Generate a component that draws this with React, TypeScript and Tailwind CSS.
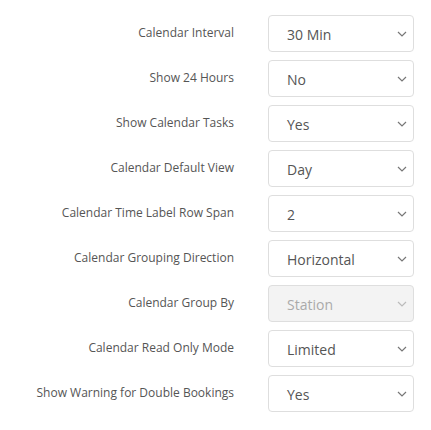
const rows: { label: string; value: string; disabled?: boolean }[] = [
  { label: "Calendar Interval", value: "30 Min" },
  { label: "Show 24 Hours", value: "No" },
  { label: "Show Calendar Tasks", value: "Yes" },
  { label: "Calendar Default View", value: "Day" },
  { label: "Calendar Time Label Row Span", value: "2" },
  { label: "Calendar Grouping Direction", value: "Horizontal" },
  { label: "Calendar Group By", value: "Station", disabled: true },
  { label: "Calendar Read Only Mode", value: "Limited" },
  { label: "Show Warning for Double Bookings", value: "Yes" },
];

function Chevron({ muted }: { muted?: boolean }) {
  return (
    <svg width="10" height="6" viewBox="0 0 10 6" className={muted ? "text-[#bbb]" : "text-[#777]"}>
      <path d="M1 1l4 4 4-4" fill="none" stroke="currentColor" strokeWidth="1.2" />
    </svg>
  );
}

export default function App() {
  return (
    <div className="w-[431px] h-[430px] bg-white pt-[15px] flex flex-col gap-[8px] font-['Open_Sans',sans-serif]">
      {rows.map((r) => (
        <div key={r.label} className="flex items-center">
          <div className="w-[234px] text-right text-[12px] text-[#555] pb-[1px]">{r.label}</div>
          <div
            className={
              "ml-[34px] w-[146px] h-[37px] rounded-[4px] border border-[#dedede] flex items-center pl-[18px] pr-[6px] " +
              (r.disabled ? "bg-[#f3f3f3]" : "bg-white")
            }
          >
            <span className={"flex-1 text-[14px] pt-[2px] " + (r.disabled ? "text-[#aaa]" : "text-[#555]")}>
              {r.value}
            </span>
            <Chevron muted={r.disabled} />
          </div>
        </div>
      ))}
    </div>
  );
}
